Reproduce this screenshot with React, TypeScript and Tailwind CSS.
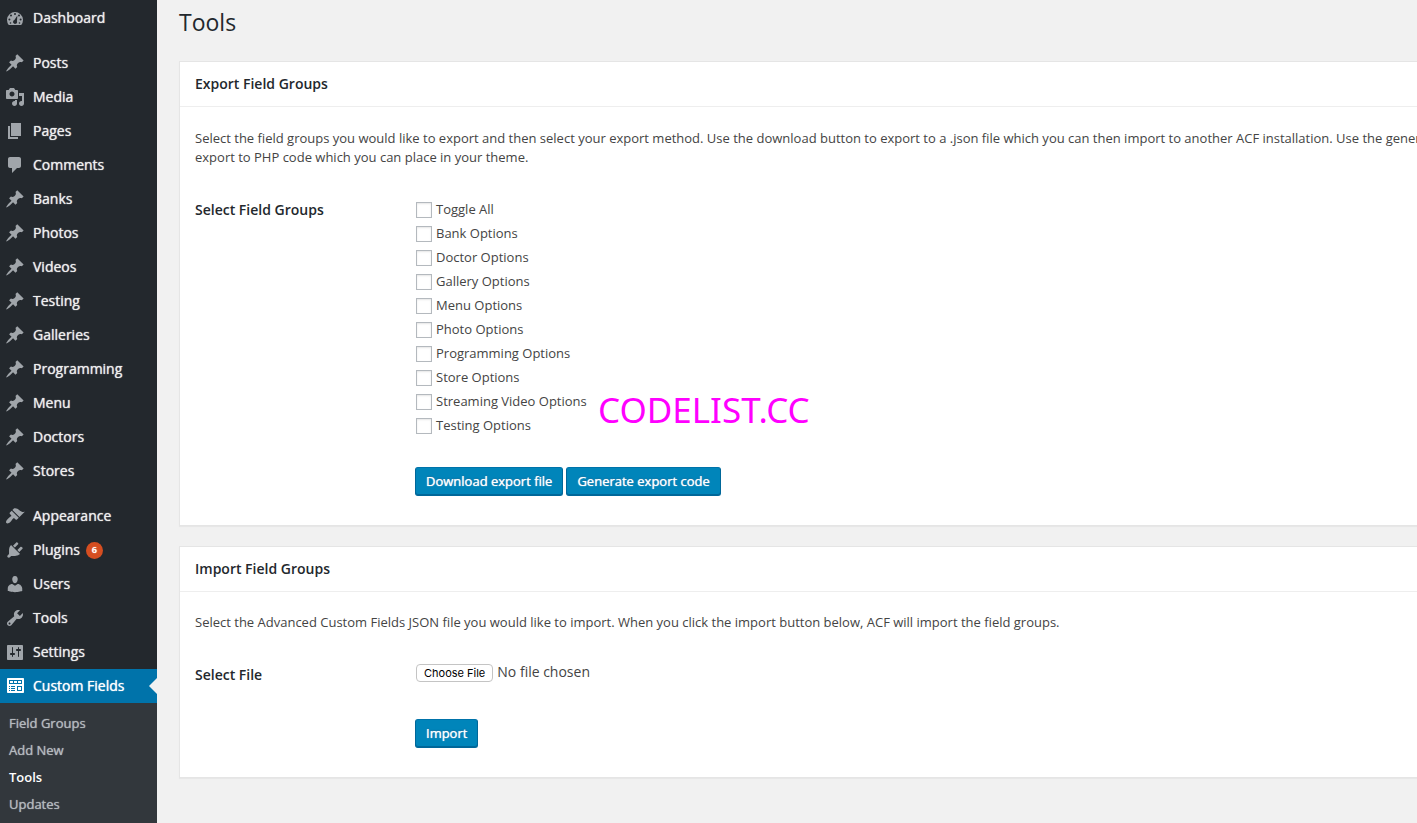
import type { ReactNode } from 'react';

const pin = (
  <path d="M10.44 3.02l1.82-1.82 6.36 6.35-1.83 1.82c-1.05-.68-2.48-.57-3.41.36l-.75.75c-.92.93-1.04 2.35-.35 3.41l-1.83 1.82-2.41-2.41-2.8 2.79c-.42.42-3.38 2.71-3.8 2.29s1.86-3.39 2.28-3.81l2.79-2.79L4.1 9.36l1.83-1.82c1.05.69 2.48.57 3.4-.36l.75-.75c.93-.92 1.05-2.35.36-3.41z" />
);

const icons: Record<string, ReactNode> = {
  pin,
  dashboard: (
    <path
      fillRule="evenodd"
      d="M3.76 17h12.48A8 8 0 1 0 3.76 17zM10 5a1 1 0 1 1 0 2 1 1 0 0 1 0-2zM6 6.600a1 1 0 1 1 0 2 1 1 0 0 1 0-2zM14 6.600a1 1 0 1 1 0 2 1 1 0 0 1 0-2zM4.400 10.600a1 1 0 1 1 0 2 1 1 0 0 1 0-2zM15.600 10.600a1 1 0 1 1 0 2 1 1 0 0 1 0-2zM12.400 7.600l-.5 5.600c.2.4.2.8.1 1.200a2 2 0 1 1-2.600-2.400zM5.500 14.200a.8.8 0 1 1 0 1.600.8.8 0 0 1 0-1.600zM14.500 14.200a.8.8 0 1 1 0 1.600.8.8 0 0 1 0-1.600z"
    />
  ),
  media: (
    <path d="M13 11V4c0-.55-.45-1-1-1h-1.67L9 1H5L3.67 3H2c-.55 0-1 .45-1 1v7c0 .55.45 1 1 1h10c.55 0 1-.45 1-1zM7 4.5c1.38 0 2.5 1.12 2.5 2.5S8.38 9.5 7 9.5 4.5 8.38 4.5 7 5.62 4.5 7 4.5zM14 6h5v10.5c0 1.38-1.12 2.5-2.5 2.5S14 17.88 14 16.5s1.12-2.5 2.5-2.5c.17 0 .34.02.5.05V9h-3V6zm-4 8.05V13h2v3.5c0 1.38-1.12 2.5-2.5 2.5S7 17.88 7 16.5 8.12 14 9.5 14c.17 0 .34.02.5.05z" />
  ),
  pages: <path d="M6 15V2h10v13H6zm-1 1h8v2H3V5h2v11z" />,
  comments: <path d="M5 2h9c1.1 0 2 .9 2 2v7c0 1.1-.9 2-2 2h-2l-5 5v-5H5c-1.1 0-2-.9-2-2V4c0-1.1.9-2 2-2z" />,
  appearance: (
    <path d="M14.48 11.06L7.41 3.99l1.5-1.5c.5-.56 2.3-.47 3.51.32 1.21.8 1.43 1.28 2.91 2.1 1.18.64 2.45 1.26 4.45.85zm-.71.71L6.7 4.7 4.93 6.47c-.39.39-.39 1.02 0 1.41l1.06 1.06c.39.39.39 1.03 0 1.42-.6.6-1.43 1.11-2.21 1.69-.35.26-.7.53-1.01.84C1.43 14.23.4 16.08 1.4 17.07c.99 1 2.84-.03 4.18-1.36.31-.31.58-.66.85-1.02.57-.78 1.08-1.61 1.69-2.21.39-.39 1.02-.39 1.41 0l1.06 1.06c.39.39 1.02.39 1.41 0z" />
  ),
  plugins: (
    <path d="M13.11 4.36L9.87 7.6 8 5.73l3.24-3.24c.35-.34 1.05-.2 1.56.32.52.51.66 1.21.31 1.55zm-8 1.77l.91-1.12 9.01 9.01-1.19.84c-.71.71-2.63 1.16-3.82 1.16H6.14L4.9 17.26c-.59.59-1.54.59-2.12 0-.59-.58-.59-1.53 0-2.12l1.24-1.24v-3.88c0-1.13.4-3.19 1.09-3.89zm7.26 3.97l3.24-3.24c.34-.35 1.04-.21 1.55.31.52.51.66 1.21.31 1.55l-3.24 3.25z" />
  ),
  users: (
    <path d="M10 9.25c-2.27 0-2.73-3.44-2.73-3.44C7 4.02 7.82 2 9.97 2c2.16 0 2.98 2.02 2.71 3.81 0 0-.41 3.44-2.68 3.44zm0 2.57L12.72 10c2.39 0 4.52 2.33 4.52 4.53v2.49s-3.65 1.13-7.24 1.13c-3.65 0-7.24-1.13-7.24-1.13v-2.49c0-2.25 1.94-4.48 4.47-4.48z" />
  ),
  tools: (
    <path d="M16.68 9.77c-1.34 1.34-3.3 1.67-4.95.99l-5.41 6.52c-.99.99-2.59.99-3.58 0s-.99-2.59 0-3.57l6.52-5.42c-.68-1.65-.35-3.61.99-4.95 1.28-1.28 3.12-1.62 4.72-1.06l-2.89 2.89 2.82 2.82 2.86-2.87c.53 1.58.18 3.39-1.08 4.65zM3.81 16.21c.4.39 1.04.39 1.43 0 .4-.4.4-1.04 0-1.43-.39-.4-1.03-.4-1.43 0-.39.39-.39 1.03 0 1.43z" />
  ),
  settings: (
    <path
      fillRule="evenodd"
      d="M18 17V4c0-.55-.45-1-1-1H3c-.55 0-1 .45-1 1v13c0 .55.45 1 1 1h14c.55 0 1-.45 1-1zM8 11h1c.55 0 1 .45 1 1s-.45 1-1 1H8v1.500c0 .28-.22.5-.5.5s-.5-.22-.5-.5V13H6c-.55 0-1-.45-1-1s.45-1 1-1h1V5.500c0-.28.22-.5.5-.5s.5.22.5.5V11zM13 9h-1c-.55 0-1-.45-1-1s.45-1 1-1h1V5.500c0-.28.22-.5.5-.5s.5.22.5.5V7h1c.55 0 1 .45 1 1s-.45 1-1 1h-1v5.500c0 .28-.22.5-.5.5s-.5-.22-.5-.5V9z"
    />
  ),
  fields: (
    <path
      fillRule="evenodd"
      d="M19 16V3c0-.55-.45-1-1-1H3c-.55 0-1 .45-1 1v13c0 .55.45 1 1 1h15c.55 0 1-.45 1-1zM4 4h13v4H4V4zm1 1v2h3V5H5zm4 0v2h3V5H9zm4 0v2h3V5h-3zM4 10h1v1H4zM6 10h4v1H6zM4 12h1v1H4zM6 12h4v1H6zM4 14h1v1H4zM6 14h4v1H6zM12 10h5v5h-5zM13 11v3h3v-3z"
    />
  ),
};

type Item = { label: string; icon: string; badge?: number };

const menuGroups: Item[][] = [
  [{ label: 'Dashboard', icon: 'dashboard' }],
  [
    { label: 'Posts', icon: 'pin' },
    { label: 'Media', icon: 'media' },
    { label: 'Pages', icon: 'pages' },
    { label: 'Comments', icon: 'comments' },
    { label: 'Banks', icon: 'pin' },
    { label: 'Photos', icon: 'pin' },
    { label: 'Videos', icon: 'pin' },
    { label: 'Testing', icon: 'pin' },
    { label: 'Galleries', icon: 'pin' },
    { label: 'Programming', icon: 'pin' },
    { label: 'Menu', icon: 'pin' },
    { label: 'Doctors', icon: 'pin' },
    { label: 'Stores', icon: 'pin' },
  ],
  [
    { label: 'Appearance', icon: 'appearance' },
    { label: 'Plugins', icon: 'plugins', badge: 6 },
    { label: 'Users', icon: 'users' },
    { label: 'Tools', icon: 'tools' },
    { label: 'Settings', icon: 'settings' },
    { label: 'Custom Fields', icon: 'fields' },
  ],
];

const submenu = ['Field Groups', 'Add New', 'Tools', 'Updates'];

const fieldGroups = [
  'Toggle All',
  'Bank Options',
  'Doctor Options',
  'Gallery Options',
  'Menu Options',
  'Photo Options',
  'Programming Options',
  'Store Options',
  'Streaming Video Options',
  'Testing Options',
];

function MenuItem({ label, icon, badge }: Item) {
  const current = label === 'Custom Fields';
  return (
    <li className="relative">
      <a
        href="#"
        className={`flex h-[34px] items-center pl-[5px] text-sm [text-shadow:0_0_1px_currentColor] ${
          current ? 'bg-[#0073aa] text-white' : 'text-[#eeeeee]'
        }`}
      >
        <svg
          viewBox="0 0 20 20"
          aria-hidden="true"
          className={`mr-2 size-5 shrink-0 ${current ? 'fill-white' : 'fill-[#a0a5aa]'}`}
        >
          {icons[icon]}
        </svg>
        {label}
        {badge !== undefined && (
          <span className="ml-1.5 flex size-[17px] items-center justify-center rounded-full bg-[#d54e21] text-[9px] font-semibold text-white">
            {badge}
          </span>
        )}
      </a>
      {current && (
        <span className="absolute top-[9px] right-0 border-y-8 border-r-8 border-y-transparent border-r-[#f1f1f1]" />
      )}
    </li>
  );
}

function Sidebar() {
  return (
    <nav aria-label="Main menu" className="flex w-[157px] shrink-0 flex-col bg-[#23282d] pt-px">
      <div className="flex flex-col gap-[11px]">
        {menuGroups.map((group) => (
          <ul key={group[0].label}>
            {group.map((item) => (
              <MenuItem key={item.label} {...item} />
            ))}
          </ul>
        ))}
      </div>
      <ul className="grow bg-[#32373c] pt-[7px]">
        {submenu.map((label) => (
          <li key={label}>
            <a
              href="#"
              className={`block pl-[9px] text-[13px] leading-[27px] ${
                label === 'Tools'
                  ? 'font-semibold text-white'
                  : 'text-[#b4b9be] [text-shadow:0_0_1px_currentColor]'
              }`}
            >
              {label}
            </a>
          </li>
        ))}
      </ul>
    </nav>
  );
}

function Panel({ title, children }: { title: string; children: ReactNode }) {
  return (
    <section className="border-y border-l border-[#e5e5e5] bg-white shadow-[0_1px_1px_rgba(0,0,0,0.04)]">
      <h2 className="border-b border-[#eeeeee] px-[15px] text-sm leading-[44px] font-semibold text-[#23282d]">
        {title}
      </h2>
      {children}
    </section>
  );
}

function PrimaryButton({ children }: { children: ReactNode }) {
  return (
    <button
      type="button"
      className="h-[29px] rounded-[3px] border border-[#006799] border-t-[#0073aa] bg-[#0085ba] px-2.5 text-[13px] text-white shadow-[inset_0_-1px_0_#006799] [text-shadow:0_0_1px_#ffffff,0_-1px_1px_#006799]"
    >
      {children}
    </button>
  );
}

export default function App() {
  return (
    <div className="flex min-h-screen bg-[#f1f1f1] font-['Open_Sans',sans-serif] text-[#444444]">
      <Sidebar />
      <main className="min-w-0 flex-1 overflow-hidden pl-[22px]">
        <h1 className="pt-2 text-[23px] leading-[29px] text-[#23282d]">Tools</h1>
        <div className="flex flex-col gap-5 pt-6">
          <Panel title="Export Field Groups">
            <p className="overflow-hidden pt-[22px] pl-[15px] text-[13px] leading-[19px] whitespace-nowrap">
              Select the field groups you would like to export and then select your export method. Use the download
              button to export to a .json file which you can then import to another ACF installation. Use the generate
              button to
              <br />
              export to PHP code which you can place in your theme.
            </p>
            <fieldset className="relative flex px-[15px] pt-[31px]">
              <legend className="float-left w-[221px] shrink-0 text-sm leading-6 font-semibold text-[#23282d]">
                Select Field Groups
              </legend>
              <div>
                {fieldGroups.map((label) => (
                  <label key={label} className="flex h-6 items-center gap-1 text-[13px]">
                    <input
                      type="checkbox"
                      className="size-4 appearance-none border border-[#b4b9be] bg-white shadow-[inset_0_1px_2px_rgba(0,0,0,0.1)]"
                    />
                    {label}
                  </label>
                ))}
              </div>
              <span className="absolute top-[213px] left-[418px] font-['Noto_Sans',sans-serif] text-[35px] leading-[60px] text-[#ff00ff]">
                CODELIST.CC
              </span>
            </fieldset>
            <div className="flex gap-[3px] pt-[29px] pb-[29px] pl-[235px]">
              <PrimaryButton>Download export file</PrimaryButton>
              <PrimaryButton>Generate export code</PrimaryButton>
            </div>
          </Panel>
          <Panel title="Import Field Groups">
            <p className="px-[15px] pt-[21px] text-[13px] leading-[19px]">
              Select the Advanced Custom Fields JSON file you would like to import. When you click the import button
              below, ACF will import the field groups.
            </p>
            <div className="flex px-[15px] pt-[31px]">
              <label htmlFor="import-file" className="w-[221px] shrink-0 text-sm leading-6 font-semibold text-[#23282d]">
                Select File
              </label>
              <input
                id="import-file"
                type="file"
                className="h-6 text-sm leading-[18px] file:mr-1 file:h-[18px] file:rounded-[4px] file:border file:border-[#c4c4c4] file:bg-white file:px-[7px] file:font-['Inter',sans-serif] file:text-[11px] file:leading-4 file:text-black"
              />
            </div>
            <div className="flex pt-8 pb-[29px] pl-[235px]">
              <PrimaryButton>Import</PrimaryButton>
            </div>
          </Panel>
        </div>
      </main>
    </div>
  );
}
